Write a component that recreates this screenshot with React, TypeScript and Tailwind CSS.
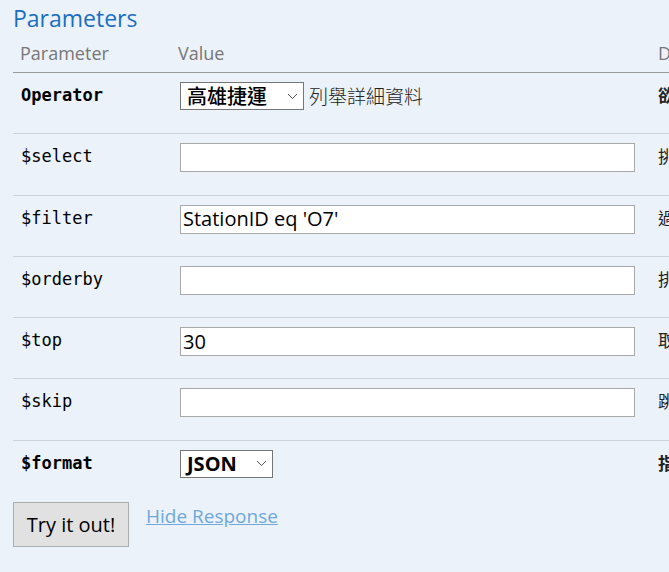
const sans = 'font-["Segoe_UI","Open_Sans","Noto_Sans","Noto_Sans_CJK_TC",sans-serif]'

type Param = {
  name: string
  required?: boolean
  kind: 'text' | 'select'
  value?: string
  desc: string
}

const params: Param[] = [
  { name: 'Operator', required: true, kind: 'select', value: '高雄捷運', desc: '欲查詢的營運業者' },
  { name: '$select', kind: 'text', desc: '挑選' },
  { name: '$filter', kind: 'text', value: "StationID eq 'O7'", desc: '過濾' },
  { name: '$orderby', kind: 'text', desc: '排序' },
  { name: '$top', kind: 'text', value: '30', desc: '取前幾筆' },
  { name: '$skip', kind: 'text', desc: '跳過前幾筆' },
  { name: '$format', required: true, kind: 'select', value: 'JSON', desc: '指定來源格式' },
]

function Chevron() {
  return (
    <svg width="11" height="7" viewBox="0 0 11 7" className="shrink-0">
      <path d="M1 1l4.5 4.5L10 1" fill="none" stroke="#555" strokeWidth="1" />
    </svg>
  )
}

function ValueCell({ p }: { p: Param }) {
  if (p.kind === 'select') {
    const isOp = p.name === 'Operator'
    return (
      <div className="flex items-center">
        <div
          className={`flex h-[28px] items-center justify-between border border-[#767676] bg-white pl-[6px] pr-[5px] ${
            isOp ? 'w-[124px]' : 'w-[93px]'
          }`}
        >
          <span
            className={`text-[20px] leading-none text-black ${
              isOp ? 'font-["Noto_Sans_CJK_TC",sans-serif] font-medium' : `${sans} font-bold`
            }`}
          >
            {p.value}
          </span>
          <Chevron />
        </div>
        {isOp && (
          <span className='ml-[5px] font-["Noto_Sans_CJK_TC",sans-serif] text-[19px] font-light text-[#222]'>列舉詳細資料</span>
        )}
      </div>
    )
  }
  return (
    <div className="flex h-[29px] w-[455px] items-center border border-[#a9a9a9] bg-white px-[2px]">
      <span className={`${sans} text-[20px] leading-none text-black`}>{p.value ?? ''}</span>
    </div>
  )
}

export default function App() {
  return (
    <div className={`min-h-[572px] w-[669px] overflow-hidden bg-[#ebf2f9] ${sans}`}>
      <div className="pl-[13px] pt-[3px]">
        <h3 className="text-[23px] leading-[30px] text-[#1b6fc2]">Parameters</h3>

        <div className="w-[900px]">
          {/* header */}
          <div className="flex h-[40px] items-center border-b border-[#9a9a9a] pt-[2px] text-[18px] text-[#777]">
            <div className="w-[165px] pl-[7px]">Parameter</div>
            <div className="w-[480px]">Value</div>
            <div>Description</div>
          </div>

          {/* rows */}
          {params.map((p, i) => (
            <div
              key={p.name}
              className={`flex h-[61.3px] pt-[9px] ${i < params.length - 1 ? 'border-b border-[#cfd3d7]' : ''}`}
            >
              <div
                className={`w-[167px] pl-[8px] pt-[2px] font-["DejaVu_Sans_Mono",monospace] text-[17px] leading-[22px] text-black ${
                  p.required ? 'font-bold' : ''
                }`}
              >
                {p.name}
              </div>
              <div className="w-[478px]">
                <ValueCell p={p} />
              </div>
              <div
                className={`pt-[2px] font-["Noto_Sans_CJK_TC",sans-serif] text-[17px] leading-[22px] text-[#222] ${
                  p.required ? 'font-bold' : ''
                }`}
              >
                {p.desc}
              </div>
            </div>
          ))}
        </div>

        {/* actions */}
        <div className="flex items-start gap-[17px]">
          <button className="h-[45px] w-[116px] border border-[#adadad] bg-[#e1e1e1] text-[20px] text-black">
            Try it out!
          </button>
          <a href="#" className="pt-[2px] text-[19px] leading-[24px] text-[#6fa8dc] underline">
            Hide Response
          </a>
        </div>
      </div>
    </div>
  )
}
